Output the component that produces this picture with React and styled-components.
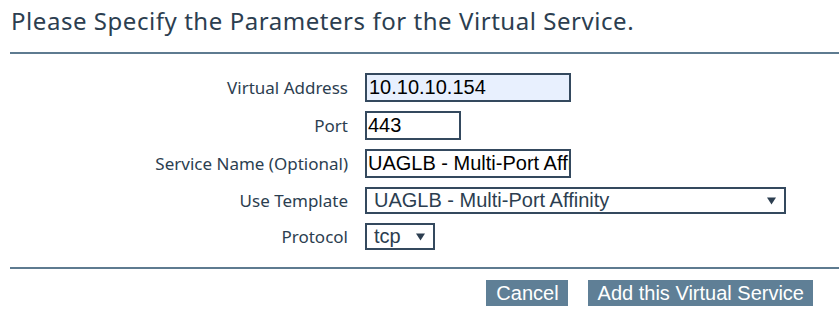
import React from "react";
import styled, { createGlobalStyle } from "styled-components";

const Global = createGlobalStyle`
  html, body { margin: 0; padding: 0; background: #fff; }
  body { font-family: "Noto Sans", "Open Sans", sans-serif; color: #2c3e50; }
`;

const Page = styled.div`
  width: 839px;
  padding-left: 10px;
  box-sizing: border-box;
`;

const Title = styled.h1`
  margin: 0;
  padding: 0 0 0 1px;
  height: 52px;
  box-sizing: border-box;
  font-size: 24px;
  font-weight: 400;
  line-height: 42px;
  letter-spacing: 0.55px;
  color: #2c3e50;
  white-space: nowrap;
`;

const Rule = styled.hr`
  margin: 0;
  border: 0;
  height: 2px;
  background: #5e7b90;
`;

const Form = styled.div`
  display: grid;
  grid-template-columns: 338px auto;
  column-gap: 17px;
  row-gap: 9px;
  align-items: center;
  justify-items: start;
  padding: 19px 0 17px;
`;

const Label = styled.label`
  justify-self: end;
  font-size: 17px;
  color: #2c3e50;
  white-space: nowrap;
`;

const TextInput = styled.input`
  box-sizing: border-box;
  width: ${(p) => p.$w}px;
  height: 29px;
  border: 2px solid #34495e;
  background: ${(p) => (p.$filled ? "#e8f0fe" : "#fff")};
  font-family: "Liberation Sans", Arial, sans-serif;
  font-size: 20px;
  color: #000;
  padding: 0 0 0 ${(p) => p.$pad}px;
  outline: none;
`;

const SelectBox = styled.div`
  box-sizing: border-box;
  width: ${(p) => p.$w}px;
  height: 27px;
  border: 2px solid #34495e;
  display: flex;
  align-items: center;
  padding: 0 8px 1px 7px;
  background: #fff;
`;

const SelectValue = styled.span`
  flex: 1;
  font-family: "Liberation Sans", Arial, sans-serif;
  font-size: 20px;
  color: #2c3e50;
  white-space: nowrap;
`;

const Arrow = styled.svg`
  width: 9px;
  height: 9px;
  flex: none;
`;

const Actions = styled.div`
  display: flex;
  justify-content: flex-end;
  gap: 20px;
  padding: 11px 26px 0 0;
`;

const Button = styled.button`
  height: 26px;
  border: 0;
  padding: 0 9px 0 10px;
  background: #5f7f96;
  color: #fff;
  font-family: "Liberation Sans", Arial, sans-serif;
  font-size: 20px;
  line-height: 26px;
  cursor: pointer;
`;

const Caret = () => (
  <Arrow viewBox="0 0 9 9">
    <path d="M0 1.5 H9 L4.5 8.5 Z" fill="#2c3e50" />
  </Arrow>
);

export default function App() {
  return (
    <Page>
      <Global />
      <Title>Please Specify the Parameters for the Virtual Service.</Title>
      <Rule />
      <Form>
        <Label>Virtual Address</Label>
        <TextInput $w={206} $pad={2} $filled defaultValue="10.10.10.154" />
        <Label>Port</Label>
        <TextInput $w={96} $pad={1} defaultValue="443" />
        <Label>Service Name (Optional)</Label>
        <TextInput $w={206} $pad={1} defaultValue="UAGLB - Multi-Port Affinity" />
        <Label>Use Template</Label>
        <SelectBox $w={421}>
          <SelectValue>UAGLB - Multi-Port Affinity</SelectValue>
          <Caret />
        </SelectBox>
        <Label>Protocol</Label>
        <SelectBox $w={70}>
          <SelectValue>tcp</SelectValue>
          <Caret />
        </SelectBox>
      </Form>
      <Rule />
      <Actions>
        <Button>Cancel</Button>
        <Button>Add this Virtual Service</Button>
      </Actions>
    </Page>
  );
}
